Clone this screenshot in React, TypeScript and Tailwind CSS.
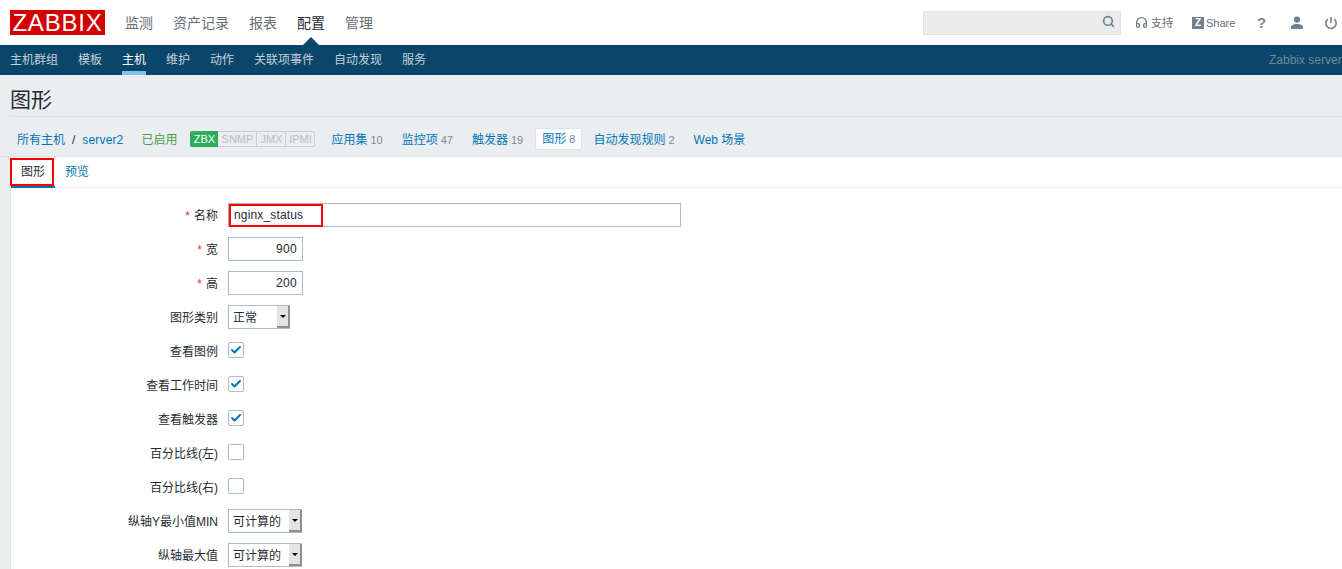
import { ReactNode } from "react";
import { Check, Headphones, Search } from "lucide-react";

const mainNav = ["监测", "资产记录", "报表", "配置", "管理"];
const subNav = ["主机群组", "模板", "主机", "维护", "动作", "关联项事件", "自动发现", "服务"];
const hostTabs = [
  { label: "应用集", count: "10", ml: "ml-[16px]" },
  { label: "监控项", count: "47", ml: "ml-[19px]" },
  { label: "触发器", count: "19", ml: "ml-[19px]" },
];

function Row({ label, required, children }: { label: string; required?: boolean; children: ReactNode }) {
  return (
    <div className="flex items-center h-[24px] mb-[10px]">
      <div className="w-[207px] pt-[2px] text-right text-[12px] text-[#1f2c33] whitespace-nowrap">
        {required && <span className="text-[#e33734] mr-[4px]">*</span>}
        {label}
      </div>
      <div className="ml-[10px] flex items-center">{children}</div>
    </div>
  );
}

function NumberBox({ value }: { value: string }) {
  return (
    <div className="w-[75px] h-[24px] border border-[#acbbc6] bg-white text-right pr-[5px] text-[12px] leading-[23px] tracking-[0.3px] text-[#1f2c33]">
      {value}
    </div>
  );
}

function Select({ value, width }: { value: string; width: string }) {
  return (
    <div className={`${width} h-[24px] border border-r-0 border-[#acbbc6] bg-white flex items-center justify-between text-[12px] text-[#1f2c33]`}>
      <span className="pl-[4px] pt-[2px]">{value}</span>
      <span className="w-[13px] h-[22px] bg-[#e4e4e4] border-r-2 border-b-2 border-[#8f8f8f] flex items-center justify-center">
        <span className="w-0 h-0 border-x-[3px] border-x-transparent border-t-[3px] border-t-black" />
      </span>
    </div>
  );
}

function Checkbox({ checked }: { checked?: boolean }) {
  return (
    <div className="w-[16px] h-[16px] mb-[2px] border border-[#acbbc6] rounded-[2px] bg-white flex items-center justify-center">
      {checked && <Check size={12} strokeWidth={4} className="text-[#0275b8]" />}
    </div>
  );
}

export default function App() {
  return (
    <div
      className="h-[569px] w-[1342px] overflow-hidden bg-[#ebeef0] text-[12px]"
      style={{ fontFamily: '"Liberation Sans", "Noto Sans CJK SC", sans-serif' }}
    >
      {/* top bar */}
      <header className="h-[45px] bg-white flex items-center pl-[10px]">
        <div className="w-[95px] h-[25px] bg-[#d40000] text-white text-[24px] leading-[26px] text-center tracking-[0.8px]">
          ZABBIX
        </div>
        <nav className="flex gap-[20px] ml-[20px] text-[14px] text-[#666e72]">
          {mainNav.map((n) => (
            <a key={n} className={`relative h-[45px] leading-[47px] ${n === "配置" ? "text-[#1f2c33]" : ""}`}>
              {n}
              {n === "配置" && (
                <span className="absolute left-[6px] bottom-0 w-0 h-0 border-x-[8px] border-x-transparent border-b-[8px] border-b-[#0a466a]" />
              )}
            </a>
          ))}
        </nav>
        <div className="ml-auto flex items-center text-[#666e72]">
          <div className="w-[198px] h-[24px] bg-[#ebebeb] border border-[#e2e2e2] flex items-center justify-end pr-[5px] mr-[14px]">
            <Search size={13} strokeWidth={3} className="text-[#6f818c] -mt-[2px]" />
          </div>
          <Headphones size={13} strokeWidth={2.5} className="text-[#6f818c]" />
          <span className="ml-[3px] pt-[2px] text-[11px] w-[41px]">支持</span>
          <span className="w-[12px] h-[12px] bg-[#6f818c] text-white text-[10px] leading-[12px] font-bold text-center">Z</span>
          <span className="ml-[2px] pt-[2px] text-[11px] w-[51px]">Share</span>
          <span className="w-[8px] text-[15px] font-bold text-[#7b8b95] leading-none mr-[25px]">?</span>
          <svg width="14" height="14" viewBox="0 0 14 14" className="text-[#6f818c] mr-[20px]" fill="currentColor">
            <circle cx="7" cy="3.6" r="3.1" />
            <path d="M1 13v-2c0-2 3-3 6-3s6 1 6 3v2z" />
          </svg>
          <svg width="14" height="14" viewBox="0 0 14 14" className="text-[#6f818c] mr-[4px]" fill="none" stroke="currentColor" strokeWidth="1.6">
            <path d="M7 1v6" />
            <path d="M3.8 3.2a5.2 5.2 0 1 0 6.4 0" />
          </svg>
        </div>
      </header>

      {/* sub nav */}
      <div className="h-[30px] bg-[#0a466a] flex pl-[10px] text-[12px]">
        <nav className="flex gap-[20px]">
          {subNav.map((n) => (
            <a
              key={n}
              className={`h-[30px] leading-[30px] ${n === "主机" ? "text-white border-b-[4px] border-[#7cc4f0]" : "text-[#c3d0d9]"}`}
            >
              {n}
            </a>
          ))}
        </nav>
        <div className="ml-auto w-[73px] overflow-hidden whitespace-nowrap leading-[30px] text-[#6d8a9c]">Zabbix server2</div>
      </div>

      {/* title */}
      <div className="ml-[10px] h-[42px] border-b border-[#dfe4e7] text-[21px] leading-[49px] text-[#1f2c33]">图形</div>

      {/* host breadcrumb */}
      <div className="h-[40px] pl-[17px] pt-[12px] flex items-start text-[12px] leading-[22px] border-b border-[#dfe4e7] whitespace-nowrap">
        <a className="text-[#0275b8]">所有主机</a>
        <span className="mx-[7px] text-[#1f2c33]">/</span>
        <a className="text-[#0275b8] tracking-[0.15px]">server2</a>
        <span className="ml-[18px] text-[#429e47]">已启用</span>
        <div className="ml-[13px] mt-[2px] flex h-[16px] text-[11px] leading-[17px] text-center text-[#b5c0c7]">
          <span className="w-[28px] bg-[#2bad5c] text-white rounded-l-[2px]">ZBX</span>
          <span className="w-[39px] border-y border-r border-[#c8d0d6] leading-[15px]">SNMP</span>
          <span className="w-[29px] border-y border-r border-[#c8d0d6] leading-[15px]">JMX</span>
          <span className="w-[29px] border-y border-r border-[#c8d0d6] leading-[15px] rounded-r-[2px]">IPMI</span>
        </div>
        {hostTabs.map((t) => (
          <a key={t.label} className={`${t.ml} flex text-[#0275b8]`}>
            {t.label}
            <span className="ml-[3px] text-[11px] text-[#768d99]">{t.count}</span>
          </a>
        ))}
        <a className="ml-[12px] -mt-[1px] h-[22px] px-[6px] flex bg-white border border-[#dfe4e7] rounded-[2px] text-[#0275b8] leading-[20px]">
          图形
          <span className="ml-[3px] text-[11px] text-[#768d99]">8</span>
        </a>
        <a className="ml-[11px] flex text-[#0275b8]">
          自动发现规则
          <span className="ml-[3px] text-[11px] text-[#768d99]">2</span>
        </a>
        <a className="ml-[19px] text-[#0275b8]">Web 场景</a>
      </div>

      {/* form card */}
      <div className="ml-[10px] h-[412px] bg-white border-l border-[#dfe4e7]">
        <div className="relative h-[31px] border-b border-[#ebeef0] flex text-[12px] leading-[31px]">
          <a className="relative w-[44px] text-center text-[#1f2c33] border-b-2 border-[#0275b8] h-[31px]">
            图形
            <span className="absolute -left-[1px] top-[1px] w-[44px] h-[28px] border-2 border-[#ff0000] pointer-events-none" />
          </a>
          <a className="ml-[10px] text-[#0275b8]">预览</a>
        </div>
        <div className="pt-[15px]">
          <Row label="名称" required>
            <div className="relative w-[453px] h-[24px] border border-[#acbbc6] bg-white pl-[5px] text-[12px] leading-[23px] tracking-[0.15px] text-[#1f2c33]">
              nginx_status
              <span className="absolute left-0 top-0 w-[94px] h-[23px] border-2 border-[#ff0000] pointer-events-none" />
            </div>
          </Row>
          <Row label="宽" required><NumberBox value="900" /></Row>
          <Row label="高" required><NumberBox value="200" /></Row>
          <Row label="图形类别"><Select value="正常" width="w-[62px]" /></Row>
          <Row label="查看图例"><Checkbox checked /></Row>
          <Row label="查看工作时间"><Checkbox checked /></Row>
          <Row label="查看触发器"><Checkbox checked /></Row>
          <Row label="百分比线(左)"><Checkbox /></Row>
          <Row label="百分比线(右)"><Checkbox /></Row>
          <Row label="纵轴Y最小值MIN"><Select value="可计算的" width="w-[74px]" /></Row>
          <Row label="纵轴最大值"><Select value="可计算的" width="w-[74px]" /></Row>
        </div>
      </div>
    </div>
  );
}
